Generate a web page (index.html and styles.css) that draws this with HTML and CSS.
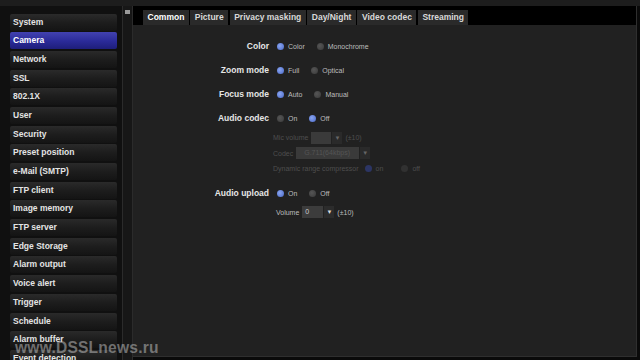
FILE: index.html
```html
<!DOCTYPE html>
<html lang="en">
<head>
    <meta charset="UTF-8">
    <meta name="viewport" content="width=device-width, initial-scale=1.0">
    <title>Camera setup</title>
    <link rel="stylesheet" href="styles.css">
</head>
<body>
    <div class="top"></div>
    <div class="app">
        <nav class="menu">
            <div class="item">System</div>
            <div class="item active">Camera</div>
            <div class="item">Network</div>
            <div class="item">SSL</div>
            <div class="item">802.1X</div>
            <div class="item">User</div>
            <div class="item">Security</div>
            <div class="item">Preset position</div>
            <div class="item">e-Mail (SMTP)</div>
            <div class="item">FTP client</div>
            <div class="item">Image memory</div>
            <div class="item">FTP server</div>
            <div class="item">Edge Storage</div>
            <div class="item">Alarm output</div>
            <div class="item">Voice alert</div>
            <div class="item">Trigger</div>
            <div class="item">Schedule</div>
            <div class="item">Alarm buffer</div>
            <div class="item">Event detection</div>
        </nav>

        <div class="scroll"><span class="up"></span></div>

        <main class="panel">
            <div class="tabs">
                <span class="tab active">Common</span>
                <span class="tab">Picture</span>
                <span class="tab">Privacy masking</span>
                <span class="tab">Day/Night</span>
                <span class="tab">Video codec</span>
                <span class="tab">Streaming</span>
            </div>

            <div class="form">
                <div class="row">
                    <span class="label">Color</span>
                    <span class="opt"><i class="radio on"></i>Color</span>
                    <span class="opt"><i class="radio"></i>Monochrome</span>
                </div>
                <div class="row">
                    <span class="label">Zoom mode</span>
                    <span class="opt"><i class="radio on"></i>Full</span>
                    <span class="opt"><i class="radio"></i>Optical</span>
                </div>
                <div class="row">
                    <span class="label">Focus mode</span>
                    <span class="opt"><i class="radio on"></i>Auto</span>
                    <span class="opt"><i class="radio"></i>Manual</span>
                </div>
                <div class="row">
                    <span class="label">Audio codec</span>
                    <span class="opt"><i class="radio"></i>On</span>
                    <span class="opt"><i class="radio on"></i>Off</span>
                </div>

                <!-- disabled while audio codec is off -->
                <div class="sub dim">
                    <span class="text">Mic volume</span>
                    <span class="select"><span class="val mic"></span><span class="arrow">&#9660;</span></span>
                    <span class="text">(±10)</span>
                </div>
                <div class="sub dim">
                    <span class="text">Codec</span>
                    <span class="select"><span class="val codec">G.711(64kbps)</span><span class="arrow">&#9660;</span></span>
                </div>
                <div class="sub dim">
                    <span class="text">Dynamic range compressor</span>
                    <span class="opt"><i class="radio on"></i>on</span>
                    <span class="opt"><i class="radio"></i>off</span>
                </div>

                <div class="row upload">
                    <span class="label">Audio upload</span>
                    <span class="opt"><i class="radio on"></i>On</span>
                    <span class="opt"><i class="radio"></i>Off</span>
                </div>
                <div class="sub volume">
                    <span class="text">Volume</span>
                    <span class="select"><span class="val vol">0</span><span class="arrow">&#9660;</span></span>
                    <span class="text">(±10)</span>
                </div>
            </div>
        </main>
    </div>
    <div class="mark">www.DSSLnews.ru</div>
</body>
</html>
```

FILE: styles.css
```css
body {
    margin: 0;
    width: 640px;
    height: 360px;
    overflow: hidden;
    background-color: #0a0a0a;
    font-family: "Liberation Sans", Arial, sans-serif;
    position: relative;
}

.top {
    height: 6px;
    background-color: #1d1d1d;
}

.app {
    display: flex;
    height: 354px;
}

/* left menu */
.menu {
    width: 122px;
    box-sizing: border-box;
    padding: 7.5px 5px 0 10px;
    display: flex;
    flex-direction: column;
    gap: 1.7px;
    background-color: #101010;
    overflow: hidden;
}

.item {
    flex: none;
    height: 17px;
    line-height: 17px;
    padding-left: 3px;
    border-radius: 2px;
    background: linear-gradient(#2a2a2a, #1d1d1d 50%, #141414);
    color: #e4e4e4;
    font-size: 8.5px;
    font-weight: bold;
    white-space: nowrap;
}

.item.active {
    background: linear-gradient(#4242b0, #2a2a98 55%, #1e1e7a);
    color: #fff;
}

.scroll {
    width: 9px;
    flex: none;
    background-color: #171717;
    border-left: 1px solid #2b2b2b;
    border-right: 1px solid #2b2b2b;
}

.up {
    display: block;
    width: 5px;
    height: 4px;
    margin: 4px auto 0;
    background-color: #9a9a9a;
}

/* main panel */
.panel {
    flex: 1;
    margin: 0 3px 3px 0;
    background-color: #212121;
    border-right: 1px solid #2f2f2f;
    border-bottom: 1px solid #2f2f2f;
}

.tabs {
    display: flex;
    gap: 1.5px;
    height: 15px;
    padding: 4px 0 0 10px;
    background-color: #000;
}

.tab {
    height: 15px;
    line-height: 15px;
    padding: 0 4.5px;
    background-color: #2a2a2a;
    color: #d8d8d8;
    font-size: 8.5px;
    font-weight: bold;
}

.tab.active {
    color: #fff;
}

.form {
    padding-top: 9px;
    display: flex;
    flex-direction: column;
}

.row {
    display: flex;
    align-items: center;
    height: 24px;
}

.row.upload {
    margin-top: 4.5px;
}

.label {
    width: 136px;
    margin-right: 8px;
    text-align: right;
    color: #e6e6e6;
    font-size: 8.5px;
    font-weight: bold;
}

.opt {
    display: flex;
    align-items: center;
    gap: 4px;
    margin-right: 12px;
    color: #bdbdbd;
    font-size: 7px;
}

.radio {
    width: 7px;
    height: 7px;
    border-radius: 50%;
    background: radial-gradient(circle at 40% 40%, #555, #3a3a3a);
}

.radio.on {
    background: radial-gradient(circle at 40% 40%, #8aa6f0, #4a68c8);
}

.sub {
    display: flex;
    align-items: center;
    height: 15.5px;
    padding-left: 140px;
    gap: 3px;
    color: #bdbdbd;
    font-size: 7px;
}

.sub.volume {
    height: 14px;
    padding-left: 143px;
}

.select {
    display: flex;
    height: 12px;
}

.val {
    background-color: #3c3c3c;
    color: #cfcfcf;
    line-height: 12px;
    padding-left: 3px;
    box-sizing: border-box;
}

.val.mic { width: 20px; }
.val.codec { width: 63px; padding-left: 8px; }
.val.vol { width: 21px; }

.arrow {
    width: 10px;
    line-height: 12px;
    text-align: center;
    background-color: #2c2c2c;
    color: #ddd;
    font-size: 6px;
    margin-left: 1px;
}

.dim {
    color: #4e4e4e;
}

.dim .val {
    background-color: #3a3a3a;
    color: #555;
}

.dim .arrow {
    background-color: #2a2a2a;
    color: #666;
}

.dim .opt {
    color: #4e4e4e;
    margin-left: 3px;
}

.dim .radio {
    background: #313131;
}

.dim .radio.on {
    background: #2c3564;
}

.mark {
    position: absolute;
    left: 15px;
    bottom: 3px;
    color: rgba(200, 200, 200, 0.5);
    font-size: 15.6px;
    font-weight: bold;
    letter-spacing: 0.2px;
}
```
